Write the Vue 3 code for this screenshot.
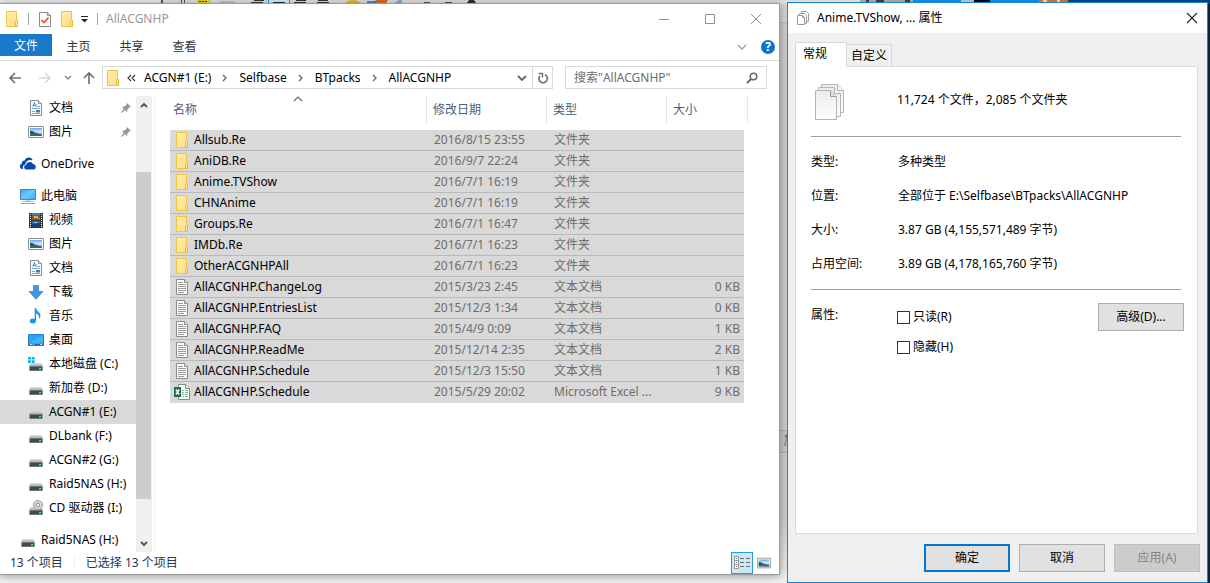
<script setup>
import { ref } from 'vue'

const crumbs = ['ACGN#1 (E:)', 'Selfbase', 'BTpacks', 'AllACGNHP']
const ribbonTabs = ['主页', '共享', '查看']

const navGroups = [
  [
    { icon: 'docs', label: '文档', pinned: true },
    { icon: 'pics', label: '图片', pinned: true },
  ],
  [{ icon: 'cloud', label: 'OneDrive', root: true }],
  [
    { icon: 'pc', label: '此电脑', root: true },
    { icon: 'video', label: '视频' },
    { icon: 'pics', label: '图片' },
    { icon: 'docs', label: '文档' },
    { icon: 'down', label: '下载' },
    { icon: 'music', label: '音乐' },
    { icon: 'desk', label: '桌面' },
    { icon: 'drivec', label: '本地磁盘 (C:)' },
    { icon: 'drive', label: '新加卷 (D:)' },
    { icon: 'drive', label: 'ACGN#1 (E:)', active: true },
    { icon: 'drive', label: 'DLbank (F:)' },
    { icon: 'drive', label: 'ACGN#2 (G:)' },
    { icon: 'drive', label: 'Raid5NAS (H:)' },
    { icon: 'cd', label: 'CD 驱动器 (I:)' },
  ],
  [{ icon: 'drive', label: 'Raid5NAS (H:)', root: true }],
]

const files = [
  ['folder', 'Allsub.Re', '2016/8/15 23:55', '文件夹', ''],
  ['folder', 'AniDB.Re', '2016/9/7 22:24', '文件夹', ''],
  ['folder', 'Anime.TVShow', '2016/7/1 16:19', '文件夹', ''],
  ['folder', 'CHNAnime', '2016/7/1 16:19', '文件夹', ''],
  ['folder', 'Groups.Re', '2016/7/1 16:47', '文件夹', ''],
  ['folder', 'IMDb.Re', '2016/7/1 16:23', '文件夹', ''],
  ['folder', 'OtherACGNHPAll', '2016/7/1 16:23', '文件夹', ''],
  ['text', 'AllACGNHP.ChangeLog', '2015/3/23 2:45', '文本文档', '0 KB'],
  ['text', 'AllACGNHP.EntriesList', '2015/12/3 1:34', '文本文档', '0 KB'],
  ['text', 'AllACGNHP.FAQ', '2015/4/9 0:09', '文本文档', '1 KB'],
  ['text', 'AllACGNHP.ReadMe', '2015/12/14 2:35', '文本文档', '2 KB'],
  ['text', 'AllACGNHP.Schedule', '2015/12/3 15:50', '文本文档', '1 KB'],
  ['excel', 'AllACGNHP.Schedule', '2015/5/29 20:02', 'Microsoft Excel ...', '9 KB'],
]

const details = [
  ['类型:', '多种类型'],
  ['位置:', '全部位于 E:\\Selfbase\\BTpacks\\AllACGNHP'],
  ['大小:', '3.87 GB (4,155,571,489 字节)'],
  ['占用空间:', '3.89 GB (4,178,165,760 字节)'],
]

const query = ref('')
const readOnly = ref(false)
const hidden = ref(false)
</script>

<template>
  <div class="desktop">
    <!-- icon definitions -->
    <svg class="defs" width="0" height="0" aria-hidden="true">
      <defs>
        <linearGradient id="gFolder" x1="0" y1="0" x2="1" y2="1">
          <stop offset="0" stop-color="#ffecae" /><stop offset="1" stop-color="#ffdf83" />
        </linearGradient>
        <linearGradient id="gScreen" x1="0" y1="0" x2="1" y2="1">
          <stop offset="0" stop-color="#35a4f4" /><stop offset=".5" stop-color="#6cc9ff" /><stop offset="1" stop-color="#35a9f5" />
        </linearGradient>
        <linearGradient id="gSky" x1="0" y1="0" x2="0" y2="1">
          <stop offset="0" stop-color="#6ea8ee" /><stop offset=".5" stop-color="#d6edf8" /><stop offset="1" stop-color="#6a9fb0" />
        </linearGradient>
        <linearGradient id="gDrive" x1="0" y1="0" x2="0" y2="1">
          <stop offset="0" stop-color="#dcdee0" /><stop offset="1" stop-color="#a9adb2" />
        </linearGradient>
        <linearGradient id="gPage" x1="0" y1="0" x2="0" y2="1">
          <stop offset="0" stop-color="#ececec" /><stop offset="1" stop-color="#fdfdfd" />
        </linearGradient>
      </defs>
      <symbol id="folder" viewBox="0 0 16 16">
        <path d="M2.5.5h10v9h1v6h-11z" fill="url(#gFolder)" stroke="#eec643" />
        <path d="M11.5 15.5v-5l1-1h1v6z" fill="#ffe9a3" stroke="#e8bd35" />
      </symbol>
      <symbol id="text" viewBox="0 0 16 16">
        <path d="M2.500.5h8l3 3v12h-11z" fill="#fcfcfc" stroke="#8c8c8c" />
        <path d="M10.500.5v3h3" fill="#e6e6e6" stroke="#8c8c8c" />
        <path d="M4 3.500h5M4 5.500h8M4 7.500h8M4 9.500h8M4 11.500h8M4 13.500h6" stroke="#9c9c9c" />
      </symbol>
      <symbol id="excel" viewBox="0 0 16 16">
        <path d="M4.500.5h7l4 4v11h-11z" fill="#fff" stroke="#8a8a8a" />
        <path d="M11.500.5v4h4" fill="#eee" stroke="#8a8a8a" />
        <path d="M8 6.500h2M11 6.500h3M8 8.500h2M11 8.500h3M8 10.500h2M11 10.500h3M8 12.500h2M11 12.500h3" stroke="#77b896" />
        <path d="M0 3h7v10H0z" fill="#1f7144" />
        <path d="M2 5.500l3.200 5M5.200 5.500l-3.200 5" stroke="#fff" stroke-width="1.400" />
      </symbol>
      <symbol id="docs" viewBox="0 0 16 16">
        <path d="M2.500.5h8l3 3v12h-11z" fill="#fbfbfb" stroke="#8c8c8c" />
        <path d="M10.500.5v3h3" fill="#e6e6e6" stroke="#8c8c8c" />
        <path d="M4.500 6.500l2-4 1 4M5 5.500h2" fill="none" stroke="#2f97dd" />
        <path d="M8 4.500h1M8 6.500h4M4 8.500h8M4 11.500h3M4 13.500h8" stroke="#7aa9cc" />
        <path d="M8 10h4v2.500H8z" fill="#3c7fae" />
      </symbol>
      <symbol id="pics" viewBox="0 0 16 16">
        <path d="M.5 2.500h15v11H.5z" fill="#fff" stroke="#8e8e8e" />
        <path d="M2 4h12v8H2z" fill="url(#gSky)" />
        <path d="M2 7.500c2-1 3 .8 5 1s3 1.200 7 1.500v2H2z" fill="#3d6672" />
        <path d="M2 7c2-.6 3 .8 5 1.500l-2 1.500H2z" fill="#34554a" />
      </symbol>
      <symbol id="cloud" viewBox="0 0 16 16">
        <path d="M2 13a2.800 2.800 0 0 1-.4-5.300 3.300 3.300 0 0 1 3-3.200 4.400 4.400 0 0 1 8-.7l-1.200.4a4.600 4.600 0 0 0-6 4 3.400 3.400 0 0 0-2.200 4.800z" fill="#0b47ad" />
        <path d="M6 13.500a2.400 2.400 0 0 1 .1-4.700 3.800 3.800 0 0 1 7-.8 2.800 2.800 0 0 1 .6 5.500z" fill="#0b47ad" />
      </symbol>
      <symbol id="pc" viewBox="0 0 16 16">
        <path d="M.5 1.500h15v10H.5z" fill="url(#gScreen)" stroke="#4b88ac" />
        <path d="M6 12h4v1H6z" fill="#c8d4dc" /><path d="M3 13.500h10" stroke="#a3b6c2" /><path d="M1 15.500h14" stroke="#8fa6b5" />
      </symbol>
      <symbol id="video" viewBox="0 0 16 16">
        <path d="M1 1h14v15H1z" fill="#363636" />
        <path d="M4 1h8v7H4z" fill="#7a5a2c" /><path d="M4 9h8v6H4z" fill="#2c66b4" />
        <path d="M4 1h8v2H4z" fill="#3b7fd0" /><path d="M6 4h4v2H6z" fill="#e6b43a" /><path d="M5 6h3v1H5z" fill="#d34c34" /><path d="M9 6h3v1H9z" fill="#78bb48" />
        <path d="M4 13l3-2 2 1 3-1v4H4z" fill="#163e78" /><path d="M6 10h3v1H6z" fill="#9ecbf2" />
        <path d="M2.500 2v13M13.500 2v13" stroke="#f4f4f4" stroke-width="1" stroke-dasharray="1 1" />
      </symbol>
      <symbol id="down" viewBox="0 0 16 16">
        <path d="M5.500 1.500h5v6h4.500L8 15.300 1 7.500h4.500z" fill="#3c97e4" stroke="#2a83cd" stroke-width=".7" />
      </symbol>
      <symbol id="music" viewBox="0 0 16 16">
        <ellipse cx="4.800" cy="13" rx="3" ry="2.500" fill="#0f9aec" />
        <path d="M6.700 13V0h1.300c.5 3.500 5 4.500 4.500 8-.2 1.300-.8 2.200-1.500 3 .6-3-.5-4.800-3-5.500V13z" fill="#0f9aec" />
      </symbol>
      <symbol id="desk" viewBox="0 0 16 16">
        <path d="M.5 2.500h15v11H.5z" fill="#2fa1f4" stroke="#1f7fc5" />
        <path d="M1 11L15 3v8z" fill="#45aefa" /><path d="M1 12.500h14" stroke="#176aa7" /><path d="M2 12.500h2M5 12.500h1M12 12.500h2" stroke="#c4e6ff" />
      </symbol>
      <symbol id="drive" viewBox="0 0 16 16">
        <path d="M3 7h10l2 3H1z" fill="url(#gDrive)" />
        <path d="M1 10h14v5H1z" fill="#9da1a5" /><path d="M2 10.500h12v4H2z" fill="#45484a" />
        <path d="M11 12h2v1.500h-2z" fill="#3ff05c" />
      </symbol>
      <symbol id="drivec" viewBox="0 0 16 16">
        <use href="#drive" /><path d="M0 1h3v2.600H0zM3.700 1h3v2.600h-3zM0 4.300h3v2.600H0zM3.700 4.300h3v2.600h-3z" fill="#13b5ea" />
      </symbol>
      <symbol id="cd" viewBox="0 0 16 16">
        <use href="#drive" /><circle cx="10" cy="5" r="4.500" fill="#d9dbdc" stroke="#95999c" />
        <circle cx="10" cy="5" r="1.800" fill="#fff" stroke="#898d90" />
      </symbol>
      <symbol id="pin" viewBox="0 0 12 12">
        <path d="M7 1l4 4-1.500.3-2 2L7 10 5 8.200 1.500 11l-.6-.6L3.800 7 2 5l2.700-.5 2-2z" fill="#8b98a3" />
      </symbol>
    </svg>

    <!-- strip of the windows that lie behind -->
    <svg class="behind" width="1210" height="4" viewBox="0 0 1210 4" aria-hidden="true">
      <path d="M0 0h860v4H0z" fill="#dedede" /><path d="M0 0h160v4H0z" fill="#eaeaea" />
      <path d="M161 0h2v3h-2zM181 0h1v3h-1zM184 0h1v3h-1z" fill="#555" />
      <path d="M197 0h13v3h-13z" fill="#e9d51f" /><path d="M199 1.500h9" stroke="#4c4611" stroke-dasharray="2 1" />
      <path d="M220 2h15" stroke="#aaa" />
      <path d="M254 .5h10M251 2.500h12M296 .5h10M294 2.500h12M318 .5h10M317 2.500h12" stroke="#333" />
      <path d="M268 0h22v3h-22z" fill="#d4eafa" /><path d="M268.500 0v3M289.500 0v3" stroke="#219ad8" /><path d="M273 2.500h12" stroke="#333" />
      <path d="M346 3c1-4 12-4 14 0z" fill="#e4b630" /><path d="M367 1h10v2h-10z" fill="#4a88cd" /><path d="M375 0h13l-2 3h-8z" fill="#e46822" />
      <path d="M394 3l5-3h3v3z" fill="#75b3df" /><path d="M424 2.500h6M445 2.500h7" stroke="#555" /><path d="M467 3l2-3h5l2 3z" fill="#333" />
      <path d="M860 0h54v4h-54z" fill="#a5a5a5" /><path d="M866 0h3v3h-3zM876 0h8v2h-8zM905 0h5v3h-5z" fill="#3c3c3c" />
      <path d="M913 0h140v4H913z" fill="#098be6" /><path d="M961 0h13v3h-13z" fill="#b6bcc4" /><path d="M974 0h16v3h-16z" fill="#05070c" />
      <path d="M1039 0h29v3h-29z" fill="#d46a35" /><path d="M1043 0h4v3h-4zM1057 0h3v3h-3z" fill="#efd3a4" />
      <path d="M1068 0h142v4h-142z" fill="#06437e" />
    </svg>
    <div class="peek" aria-hidden="true">加</div>

    <section class="explorer" aria-label="AllACGNHP">
      <header class="titlebar">
        <svg class="ic"><use href="#folder" /></svg>
        <i class="bar"></i>
        <button class="plain" aria-label="属性">
          <svg class="ic" viewBox="0 0 16 16">
            <path d="M2.500 1.500h8l3 3v11h-11z" fill="#fcfcfc" stroke="#8a8a8a" /><path d="M10.500 1.500v3h3" fill="none" stroke="#8a8a8a" />
            <path d="M4.500 9l2.500 2.500 4.500-5" fill="none" stroke="#e4571b" stroke-width="1.600" />
          </svg>
        </button>
        <button class="plain" aria-label="新建文件夹"><svg class="ic"><use href="#folder" /></svg></button>
        <button class="plain" aria-label="自定义快速访问工具栏">
          <svg class="drop" viewBox="0 0 8 8"><path d="M0 1.500h7" stroke="#222" /><path d="M0 4h7l-3.500 3.500z" fill="#222" /></svg>
        </button>
        <i class="bar"></i>
        <span class="wintitle">AllACGNHP</span>
        <span class="winbtns">
          <button aria-label="最小化"><svg viewBox="0 0 12 12"><path d="M1 6.500h10" /></svg></button>
          <button aria-label="最大化"><svg viewBox="0 0 12 12"><path d="M1.500 1.500h9v9h-9z" /></svg></button>
          <button aria-label="关闭"><svg viewBox="0 0 12 12"><path d="M1 1l10 10M11 1L1 11" /></svg></button>
        </span>
      </header>

      <nav class="ribbon">
        <button class="file">文件</button>
        <button v-for="t in ribbonTabs" :key="t" class="tab">{{ t }}</button>
        <span class="ribbonend">
          <button class="plain" aria-label="展开功能区"><svg class="chev" viewBox="0 0 10 6"><path d="M1 1l4 4 4-4" fill="none" stroke="#9a9a9a" stroke-width="1.300" /></svg></button>
          <button class="help" aria-label="帮助">?</button>
        </span>
      </nav>

      <div class="address">
        <button class="plain" aria-label="后退"><svg class="arrow" viewBox="0 0 14 14"><path d="M13 7H2M7 2L2 7l5 5" fill="none" stroke="#727272" stroke-width="1.700" /></svg></button>
        <button class="plain fwd" aria-label="前进"><svg class="arrow" viewBox="0 0 14 14"><path d="M1 7h11M7 2l5 5-5 5" fill="none" stroke="#d8d8d8" stroke-width="1.700" /></svg></button>
        <button class="plain hist" aria-label="最近浏览的位置"><svg viewBox="0 0 8 6" width="8" height="6"><path d="M1 1l3 3 3-3" fill="none" stroke="#8a8a8a" stroke-width="1.500" /></svg></button>
        <button class="plain up" aria-label="向上"><svg class="arrow" viewBox="0 0 14 14"><path d="M7 13V2M2 7l5-5 5 5" fill="none" stroke="#727272" stroke-width="1.700" /></svg></button>
        <div class="path">
          <svg class="ic"><use href="#folder" /></svg>
          <button class="plain more" aria-label="更多位置"><svg viewBox="0 0 10 8" width="10" height="8"><path d="M4 1L1 4l3 3M8 1L5 4l3 3" fill="none" stroke="#333" stroke-width="1.100" /></svg></button>
          <template v-for="(c, i) in crumbs" :key="c">
            <svg v-if="i" class="sep" viewBox="0 0 6 8"><path d="M1 1l3 3-3 3" fill="none" stroke="#666" stroke-width="1.300" /></svg>
            <button class="crumb">{{ c }}</button>
          </template>
          <button class="plain pathdrop" aria-label="以前的位置"><svg class="chev" viewBox="0 0 10 6"><path d="M1 1l4 4 4-4" fill="none" stroke="#666" stroke-width="1.800" /></svg></button>
          <button class="plain reload" aria-label="刷新">
            <svg viewBox="0 0 12 12" width="12" height="12"><path d="M8 2.800a4.200 4.200 0 1 1-5.200 1.200" fill="none" stroke="#747474" stroke-width="1.700" /><path d="M1.500 1.500h4v4" fill="none" stroke="#747474" stroke-width="1.500" /></svg>
          </button>
        </div>
        <label class="search">
          <input v-model="query" type="text" aria-label="搜索" placeholder="搜索&quot;AllACGNHP&quot;" />
          <svg viewBox="0 0 12 12" width="12" height="12"><circle cx="7.500" cy="4.500" r="3.300" fill="none" stroke="#6a6a6a" stroke-width="1.600" /><path d="M5 7L1 11" stroke="#6a6a6a" stroke-width="1.900" /></svg>
        </label>
      </div>

      <div class="content">
        <aside class="side">
          <div class="tree">
            <div v-for="(g, gi) in navGroups" :key="gi" class="group">
              <a v-for="n in g" :key="n.label" href="#" class="node" :class="{ root: n.root, active: n.active }">
                <svg class="ic"><use :href="'#' + n.icon" /></svg>
                <span>{{ n.label }}</span>
                <svg v-if="n.pinned" class="pin"><use href="#pin" /></svg>
              </a>
            </div>
          </div>
          <div class="scroll">
            <button class="plain" aria-label="向上滚动"><svg class="sarrow" viewBox="0 0 8 6"><path d="M1 5l3-3 3 3" /></svg></button>
            <i class="before"></i><i class="thumb"></i><i class="after"></i>
            <button class="plain" aria-label="向下滚动"><svg class="sarrow" viewBox="0 0 8 6"><path d="M1 1l3 3 3-3" /></svg></button>
          </div>
        </aside>
        <main class="list">
          <table>
            <colgroup><col /><col class="c2" /><col class="c3" /><col class="c4" /></colgroup>
            <thead>
              <tr>
                <th scope="col">名称
                  <svg class="sort" viewBox="0 0 10 6"><path d="M1 5l4-4 4 4" fill="none" stroke="#6a6a6a" stroke-width="1.200" /></svg>
                </th>
                <th scope="col">修改日期</th><th scope="col">类型</th><th scope="col">大小</th>
              </tr>
            </thead>
            <tbody>
              <tr v-for="(f, i) in files" :key="i">
                <td class="name"><span><svg class="ic"><use :href="'#' + f[0]" /></svg>{{ f[1] }}</span></td>
                <td>{{ f[2] }}</td><td>{{ f[3] }}</td><td class="size">{{ f[4] }}</td>
              </tr>
            </tbody>
          </table>
        </main>
      </div>

      <footer class="status">
        <span>13 个项目</span><i></i><span>已选择 13 个项目</span>
        <span class="views">
          <button class="on" aria-label="详细信息">
            <svg viewBox="0 0 16 14" width="16" height="14">
              <path d="M.5.5h4v4h-4zM.5 4.500h4v4h-4zM.5 8.500h4v4h-4z" fill="#fff" stroke="#949494" />
              <path d="M2 2h1v1H2z" fill="#555" /><path d="M2 6h1v1H2z" fill="#2b7fd4" /><path d="M2 10h1v1H2z" fill="#d22" />
              <path d="M6 2.500h4M12 2.500h4M6 6.500h4M12 6.500h4M6 10.500h4M12 10.500h4" stroke="#6b6b6b" />
            </svg>
          </button>
          <button aria-label="大图标"><svg viewBox="0 0 16 16" width="14" height="14"><use href="#pics" /></svg></button>
        </span>
      </footer>
    </section>

    <section class="dialog" role="dialog" aria-label="Anime.TVShow, ... 属性">
      <header class="dtitle">
        <svg viewBox="0 0 14 16" width="14" height="16" fill="#fff" stroke="#9a9a9a"><path d="M4.500 1.500h5l2 2v8h-7z" /><path d="M2.500 3.500h5l2 2v8h-7z" /><path d="M.5 5.500h5l2 2v7h-7z" /><path d="M5.500 5.500v2h2" fill="none" /></svg>
        <span>Anime.TVShow, ... 属性</span>
        <button class="plain" aria-label="关闭"><svg viewBox="0 0 12 12" width="12" height="12"><path d="M1 1l10 10M11 1L1 11" stroke="#222" stroke-width="1.100" /></svg></button>
      </header>
      <div class="dbody">
        <div class="dtabs" role="tablist">
          <button role="tab" aria-selected="true" class="sel">常规</button>
          <button role="tab" aria-selected="false">自定义</button>
        </div>
        <div class="panel" role="tabpanel">
          <div class="summary">
            <svg viewBox="0 0 32 38" width="32" height="38" fill="url(#gPage)" stroke="#b4b4b4">
              <path d="M7.500 1.500h16l6 6v22h-22z" /><path d="M23.500 1.500v6h6" />
              <path d="M4.500 4.500h16l6 6v23h-22z" /><path d="M20.500 4.500v6h6" />
              <path d="M1.500 7.500h15l6 6v23h-21z" /><path d="M16.500 7.500v6h6" fill="#ddd" stroke="#999" />
            </svg>
            <span>11,724 个文件，2,085 个文件夹</span>
          </div>
          <hr />
          <dl>
            <template v-for="d in details" :key="d[0]"><dt>{{ d[0] }}</dt><dd>{{ d[1] }}</dd></template>
          </dl>
          <hr />
          <div class="attrs">
            <span>属性:</span>
            <div class="checks">
              <label><input v-model="readOnly" type="checkbox" />只读(R)</label>
              <label><input v-model="hidden" type="checkbox" />隐藏(H)</label>
            </div>
            <button class="btn">高级(D)...</button>
          </div>
        </div>
        <div class="actions">
          <button class="btn primary">确定</button>
          <button class="btn">取消</button>
          <button class="btn" disabled>应用(A)</button>
        </div>
      </div>
    </section>
  </div>
</template>

<style>
body { margin: 0; }
</style>

<style scoped>
.desktop {
  position: relative; display: flex; gap: 7px; box-sizing: border-box; min-height: 100vh; padding-right: 2px;
  overflow: hidden;
  background: linear-gradient(#06243f, #06243f) right / 2px 100% no-repeat, linear-gradient(#d2d2d2 22px, #b4b4b4 22px, #b4b4b4 23px, #cbcbcb 23px, #cbcbcb 520px, #f0f0f0);
  font: 12px/16px "Noto Sans", "Noto Sans CJK SC", sans-serif; color: #000;
}
.desktop *, .desktop *::before { box-sizing: border-box; }
button, input { font: inherit; color: inherit; }
button { padding: 0; border: 0; background: none; white-space: nowrap; }
svg { flex: none; display: block; }
.defs { position: absolute; }
.ic { width: 16px; height: 16px; }
.plain { display: flex; align-items: center; justify-content: center; }
.behind { position: absolute; top: 0; left: 0; }
.peek {
  position: absolute; top: 430px; left: 64%; width: 20px; height: 23px; padding-left: 9px; overflow: hidden;
  border: solid #a8a8a8; border-width: 1px 0; background: #c4c4c4; color: #666; line-height: 20px;
}

.explorer {
  position: relative; flex: 780 1 780px; min-width: 0; display: flex; flex-direction: column;
  margin: 3px 0 8px; border: solid #9b9b9b; border-width: 1px 1px 1px 0; background: #fff; box-shadow: 0 1px 8px rgba(0, 0, 0, .35);
}
.titlebar { display: flex; align-items: center; gap: 6px; height: 30px; padding-left: 4px; color: #999; }
.bar { width: 1px; height: 12px; margin: 0 2px; background: #a5a5a5; }
.drop { width: 8px; height: 8px; }
.winbtns { display: flex; margin-left: auto; }
.winbtns button { display: flex; align-items: center; justify-content: center; width: 46px; height: 30px; }
.winbtns svg { width: 12px; height: 12px; fill: none; stroke: #909090; }
.ribbon { display: flex; align-items: center; height: 27px; padding-bottom: 4px; border-bottom: 1px solid #dadbdc; color: #333; }
.file { align-self: stretch; width: 52px; padding-top: 2px; background: #1979ca; color: #fff; }
.tab { width: 53px; padding-top: 4px; }
.ribbonend { display: flex; align-items: center; gap: 14px; margin-left: auto; padding: 4px 4px 0 0; }
.chev { width: 10px; height: 6px; }
.help { width: 14px; height: 14px; border-radius: 50%; background: #0c74d0; color: #fff; font-weight: 700; line-height: 14px; }
.address { display: flex; align-items: center; height: 35px; padding: 0 12px 2px 8px; }
.arrow { width: 14px; height: 14px; }
.fwd { margin-left: 16px; }
.hist { margin-left: 12px; }
.up { margin-left: 10px; }
.path { display: flex; align-items: center; flex: 1; height: 23px; min-width: 0; margin: 0 12px 0 6px; padding-left: 2px; border: 1px solid #d9d9d9; }
.more { margin: 0 7px 0 6px; }
.sep { width: 6px; height: 8px; margin: 0 11px; }
.pathdrop { width: 20px; height: 21px; margin-left: auto; }
.reload { width: 20px; height: 21px; border-left: 1px solid #d9d9d9; }
.search { display: flex; align-items: center; width: 202px; height: 23px; padding: 0 8px; border: 1px solid #d9d9d9; }
.search input { flex: 1; min-width: 0; padding: 0; border: 0; outline: 0; background: none; }
.search input::placeholder { color: #6d6d6d; opacity: 1; }

.content { flex: 1; display: flex; min-height: 0; }
.side { display: flex; width: 155px; border-right: 1px solid #f3f3f3; }
.tree { flex: 1; min-width: 0; }
.group + .group { margin-top: 8px; }
.node { display: flex; align-items: center; gap: 5px; height: 24px; padding: 0 4px 1px 28px; color: #000; text-decoration: none; white-space: nowrap; }
.root { padding-left: 20px; }
.active { background: #d9d9d9; }
.pin { width: 12px; height: 12px; margin-left: auto; }
.scroll { display: flex; flex-direction: column; width: 16px; margin-right: 2px; background: #f0f0f0; }
.scroll .plain { height: 17px; }
.sarrow { width: 8px; height: 6px; fill: none; stroke: #505050; stroke-width: 1.8; }
.before { flex: 59; }
.thumb { flex: 326; margin-right: 1px; background: #cdcdcd; }
.after { flex: 36; }
.list { flex: 1; min-width: 0; padding: 0 35px 0 15px; }
table { width: 100%; border-collapse: separate; border-spacing: 0; table-layout: fixed; }
.c2, .c3 { width: 120px; }
.c4 { width: 77px; }
th { position: relative; height: 34px; padding: 0 0 7px 6px; color: #4c607a; font-weight: 400; text-align: left; }
th:first-child { padding-left: 3px; }
th::after { content: ""; position: absolute; top: 0; right: 0; width: 1px; height: 27px; background: #e5e5e5; }
th:last-child::after { right: -4px; }
.sort { position: absolute; top: 0; left: calc(50% - 6px); width: 10px; height: 6px; }
td { height: 21px; padding: 0 0 0 7px; border-bottom: 1px solid #b9b9b9; background: #d9d9d9; color: #6d6d6d; white-space: nowrap; line-height: 20px; }
tbody tr:last-child td { border-bottom-color: #d9d9d9; }
.name { padding-left: 4px; color: #000; }
.name span { display: flex; align-items: center; gap: 4px; }
td.size { padding-right: 4px; text-align: right; }

.status { display: flex; align-items: center; height: 22px; padding-left: 10px; color: #26374f; }
.status i { width: 1px; height: 12px; margin: 0 11px; background: #ececec; }
.views { display: flex; margin-left: auto; padding-right: 4px; }
.views button { display: flex; align-items: center; justify-content: center; width: 22px; height: 22px; }
.views .on { border: 1px solid #26a0da; background: #cbe8f6; }

.dialog { position: relative; flex: 421 1 421px; min-width: 0; display: flex; flex-direction: column; margin-top: 2px; border: 1px solid #1883d7; background: #f0f0f0; }
.dtitle { display: flex; align-items: center; gap: 6px; height: 30px; padding: 0 9px; background: #fff; }
.dtitle button { margin-left: auto; }
.dbody { flex: 1; display: flex; flex-direction: column; padding: 9px 9px 10px 7px; }
.dtabs { display: flex; align-items: flex-end; height: 24px; }
.dtabs button { height: 22px; width: 45px; border: 1px solid #d9d9d9; border-width: 1px 1px 0 0; background: #f0f0f0; }
.dtabs .sel { z-index: 1; width: 52px; height: 25px; margin-bottom: -1px; padding: 0 12px 2px 0; border-width: 1px 1px 0 1px; background: #fff; }
.panel { flex: 1; padding: 16px 16px 0 15px; border: 1px solid #dcdcdc; background: #fff; }
.summary { display: flex; align-items: center; height: 38px; padding-left: 3px; }
.summary span { margin: 0 0 4px 51px; }
hr { height: 1px; margin: 0; border: 0; background: #a0a0a0; }
.summary + hr { margin-top: 15px; }
dl { display: grid; grid-template-columns: 87px 1fr; margin: 0; padding: 8px 0; }
dt, dd { margin: 0; line-height: 34px; }
.attrs { display: flex; align-items: flex-start; padding-top: 13px; margin-right: -3px; }
.attrs > span { width: 86px; line-height: 24px; }
.checks { display: grid; gap: 14px; padding-top: 6px; }
.checks label { display: flex; align-items: center; gap: 3px; }
.checks input { appearance: none; width: 13px; height: 13px; margin: 0; border: 1px solid #333; background: #fff; }
.checks input:checked { background: #333; box-shadow: inset 0 0 0 2px #fff; }
.btn { width: 86px; height: 28px; border: 1px solid #adadad; background: #e1e1e1; }
.attrs .btn { margin-left: auto; }
.primary { border: 2px solid #0078d7; }
.btn:disabled { border-color: #bfbfbf; background: #ccc; color: #838383; }
.actions { display: flex; justify-content: flex-end; gap: 9px; margin: 10px -2px 0 0; }
</style>
